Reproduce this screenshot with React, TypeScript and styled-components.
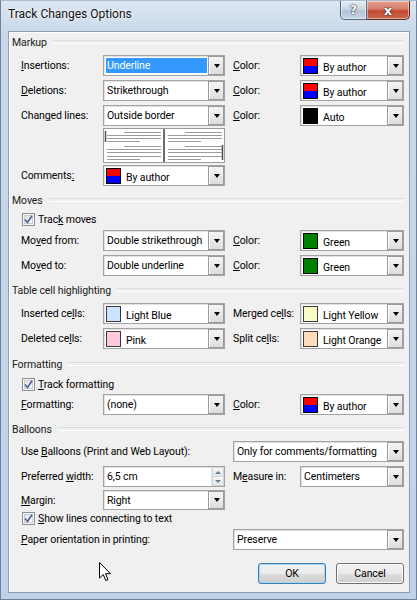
import React from "react";
import styled, { createGlobalStyle } from "styled-components";

const Global = createGlobalStyle`
  html, body { margin: 0; padding: 0; }
  body {
    width: 417px; height: 600px; overflow: hidden;
    font-family: Roboto, "Liberation Sans", Arial, sans-serif;
    font-size: 10.5px; letter-spacing: -0.1px; color: #000;
  }
  * { box-sizing: border-box; }
`;

const Window = styled.div`
  position: relative;
  width: 417px;
  height: 600px;
  display: flex;
  flex-direction: column;
  background: linear-gradient(180deg, #dbe6f2 0%, #c9d9ea 30px, #bfd2e8 100%);
  border: 1px solid #6d839c;
  border-top-color: #a9bcd2;
  overflow: hidden;
`;

const TitleBar = styled.div`
  height: 30px;
  flex: none;
  display: flex;
  align-items: flex-start;
  padding: 0 6px 0 7px;
`;

const Title = styled.div`
  font-size: 12px;
  letter-spacing: 0;
  line-height: 27px;
  color: #111;
  text-shadow: 0 0 6px rgba(255, 255, 255, 0.95), 0 0 2px rgba(255, 255, 255, 0.9);
`;

const TitleButtons = styled.div`
  margin-left: auto;
  display: flex;
  height: 19px;
`;

const CaptionButton = styled.div<{ $close?: boolean }>`
  width: ${(p) => (p.$close ? 43 : 27)}px;
  height: 19px;
  display: flex;
  align-items: center;
  justify-content: center;
  border: 1px solid ${(p) => (p.$close ? "#5e2a22" : "#56677c")};
  border-top: none;
  ${(p) => (p.$close ? "border-left: none;" : "")}
  border-radius: ${(p) => (p.$close ? "0 0 5px 0" : "0 0 0 5px")};
  background: ${(p) =>
    p.$close
      ? "linear-gradient(180deg, #e6a08f 0%, #d37c69 45%, #c24832 55%, #c86a50 100%)"
      : "linear-gradient(180deg, #e3eaf3 0%, #ccd8e6 45%, #b3c4d8 55%, #c6d5e6 100%)"};
  box-shadow: inset 0 0 0 1px rgba(255, 255, 255, 0.45);
  color: #fff;
  font-family: "DejaVu Sans", sans-serif;
  font-weight: bold;
  font-size: ${(p) => (p.$close ? 13 : 12)}px;
  text-shadow: 0 0 2px #333, 0 0 1px #000;
`;

const Client = styled.div`
  flex: 1;
  margin: 0 6px 6px 7px;
  background: #f0f0f0;
  border: 1px solid #8a9db4;
  box-shadow: inset 1px 1px 0 #fff;
  display: flex;
  flex-direction: column;
  padding: 0 4px 0 3px;
`;

const Heading = styled.div<{ $mt: number }>`
  display: flex;
  align-items: center;
  gap: 6px;
  height: 16px;
  margin-top: ${(p) => p.$mt}px;
  color: #1a1a1a;
  &::after {
    content: "";
    flex: 1;
    height: 2px;
    border-top: 1px solid #d5dfe5;
    border-bottom: 1px solid #ffffff;
    margin-right: 1px;
  }
`;

const Row = styled.div<{ $mt: number; $h?: number }>`
  display: grid;
  grid-template-columns: 82px 122px 8px 67px 104px;
  height: ${(p) => p.$h ?? 21}px;
  margin-top: ${(p) => p.$mt}px;
  padding-left: 9px;
`;

const Label = styled.div<{ $col?: string }>`
  grid-column: ${(p) => p.$col ?? "auto"};
  align-self: center;
  white-space: nowrap;
`;

const Cell = styled.div<{ $col: string }>`
  grid-column: ${(p) => p.$col};
  display: flex;
`;

const U = styled.span`
  text-decoration: underline;
`;

const ComboBox = styled.div`
  flex: 1;
  display: flex;
  align-items: stretch;
  background: #fff;
  border: 1px solid #a3a3a3;
  box-shadow: inset 1px 1px 0 #e2e2e2;
  min-width: 0;
`;

const ComboText = styled.div<{ $selected?: boolean; $low?: boolean }>`
  flex: 1;
  display: flex;
  align-items: ${(p) => (p.$low ? "flex-end" : "center")};
  padding: ${(p) => (p.$low ? "0 0 0 4px" : "0 0 0 2px")};
  white-space: nowrap;
  overflow: hidden;
  & > span {
    padding: 0 1px;
    line-height: 15px;
    background: ${(p) => (p.$selected ? "#3399ff" : "transparent")};
    color: ${(p) => (p.$selected ? "#fff" : "#000")};
    flex: ${(p) => (p.$selected ? 1 : "none")};
    margin-right: ${(p) => (p.$selected ? 1 : 0)}px;
  }
`;

const DropButton = styled.div`
  width: 16px;
  flex: none;
  border-left: 1px solid #b6b6b6;
  background: linear-gradient(180deg, #f6f6f6 0%, #e9e9e9 50%, #dcdcdc 100%);
  box-shadow: inset 0 0 0 1px #fdfdfd;
  outline: 1px solid #9a9a9a;
  outline-offset: -1px;
  display: flex;
  align-items: center;
  justify-content: center;
  &::after {
    content: "";
    border-left: 3.5px solid transparent;
    border-right: 3.5px solid transparent;
    border-top: 4px solid #000;
  }
`;

const Swatch = styled.div<{ $fill: string; $border?: string }>`
  width: 15px;
  height: 16px;
  flex: none;
  align-self: center;
  margin-left: 2px;
  background: ${(p) => p.$fill};
  border: 1px solid ${(p) => p.$border ?? "#000"};
`;

const SpinBox = styled.div`
  width: 13px;
  flex: none;
  display: flex;
  flex-direction: column;
  border-left: 1px solid #e4e4e4;
`;

const SpinHalf = styled.div<{ $down?: boolean }>`
  flex: 1;
  display: flex;
  align-items: center;
  justify-content: center;
  background: linear-gradient(180deg, #f7f7f7, #e8e8e8);
  border: 1px solid #d4d4d4;
  ${(p) => (p.$down ? "border-top: none;" : "")}
  &::after {
    content: "";
    border-left: 3px solid transparent;
    border-right: 3px solid transparent;
    ${(p) => (p.$down ? "border-top: 3px solid #5f7e9e;" : "border-bottom: 3px solid #5f7e9e;")}
  }
`;

const AUTHOR = "linear-gradient(180deg, #ff0000 0 50%, #0000ff 50% 100%)";

type ComboProps = {
  value: string;
  selected?: boolean;
  swatch?: string;
  swatchBorder?: string;
};

const Combo = ({ value, selected, swatch, swatchBorder }: ComboProps) => (
  <ComboBox>
    {swatch && <Swatch $fill={swatch} $border={swatchBorder} />}
    <ComboText $selected={selected} $low={!!swatch}>
      <span>{value}</span>
    </ComboText>
    <DropButton />
  </ComboBox>
);

const Spin = ({ value }: { value: string }) => (
  <ComboBox>
    <ComboText>
      <span>{value}</span>
    </ComboText>
    <SpinBox>
      <SpinHalf />
      <SpinHalf $down />
    </SpinBox>
  </ComboBox>
);

const CheckRow = styled.div<{ $mt: number }>`
  display: flex;
  align-items: center;
  gap: 3px;
  height: 16px;
  margin-top: ${(p) => p.$mt}px;
  padding-left: 10px;
`;

const CheckBox = styled.div`
  width: 13px;
  height: 13px;
  border: 1px solid #8e8f8f;
  background: linear-gradient(135deg, #dcdcdc 0%, #f4f4f4 60%, #ffffff 100%);
  box-shadow: inset 0 0 0 1px #f4f4f4, inset 0 0 0 2px #c9ccd1;
  display: flex;
  align-items: center;
  justify-content: center;
`;

const Check = () => (
  <CheckBox>
    <svg width="9" height="9" viewBox="0 0 9 9">
      <path d="M1 4.5 L3.5 7.5 L8 0.8" fill="none" stroke="#4a5f97" strokeWidth="1.6" />
    </svg>
  </CheckBox>
);

const PreviewBox = styled.div`
  grid-column: 2;
  width: 122px;
  height: 35px;
  border: 1px solid #9b9b9b;
  background: #fff;
  display: flex;
`;

const PreviewPane = styled.div<{ $left?: boolean }>`
  flex: 1;
  ${(p) => (p.$left ? "border-right: 2px solid #6f6f6f;" : "")}
  display: flex;
`;

const lines: [number, number, number][] = [
  [3, 20, 57],
  [6, 3, 57],
  [9, 3, 57],
  [12, 3, 36],
  [17, 20, 57],
  [20, 3, 57],
  [23, 3, 57],
  [27, 3, 57],
  [30, 3, 36],
];

const Pane = ({ bar }: { bar: "left" | "right" }) => (
  <svg width="59" height="33" viewBox="0 0 59 33">
    {lines.map(([y, x1, x2], i) => (
      <line key={i} x1={x1} x2={x2} y1={y + 0.5} y2={y + 0.5} stroke="#9d9d9d" strokeWidth="1" />
    ))}
    {bar === "left" ? (
      <line x1="1.5" x2="1.5" y1="2" y2="13" stroke="#4d4d4d" strokeWidth="1.5" />
    ) : (
      <line x1="57.5" x2="57.5" y1="16" y2="31" stroke="#4d4d4d" strokeWidth="1.5" />
    )}
  </svg>
);

const ButtonRow = styled.div`
  display: flex;
  justify-content: flex-end;
  gap: 10px;
  margin-top: 13px;
  padding-right: 1px;
`;

const Button = styled.div<{ $default?: boolean }>`
  width: 68px;
  height: 21px;
  display: flex;
  align-items: center;
  justify-content: center;
  border: 1px solid ${(p) => (p.$default ? "#3c7fb1" : "#707070")};
  border-radius: 3px;
  background: linear-gradient(180deg, #f2f2f2 0%, #ebebeb 50%, #dddddd 51%, #cfcfcf 100%);
  box-shadow: inset 0 0 0 1px ${(p) => (p.$default ? "#a6d6f2" : "#fcfcfc")};
`;

const Cursor = styled.svg`
  position: absolute;
  left: 98px;
  top: 561px;
`;

export default function App() {
  return (
    <>
      <Global />
      <Window>
        <TitleBar>
          <Title>Track Changes Options</Title>
          <TitleButtons>
            <CaptionButton>?</CaptionButton>
            <CaptionButton $close>x</CaptionButton>
          </TitleButtons>
        </TitleBar>
        <Client>
          <Heading $mt={2}>Markup</Heading>
          <Row $mt={5}>
            <Label>
              <U>I</U>nsertions:
            </Label>
            <Cell $col="2">
              <Combo value="Underline" selected />
            </Cell>
            <Label $col="4">
              <U>C</U>olor:
            </Label>
            <Cell $col="5">
              <Combo value="By author" swatch={AUTHOR} />
            </Cell>
          </Row>
          <Row $mt={4}>
            <Label>
              <U>D</U>eletions:
            </Label>
            <Cell $col="2">
              <Combo value="Strikethrough" />
            </Cell>
            <Label $col="4">
              <U>C</U>olor:
            </Label>
            <Cell $col="5">
              <Combo value="By author" swatch={AUTHOR} />
            </Cell>
          </Row>
          <Row $mt={4}>
            <Label>
              Chan<U>g</U>ed lines:
            </Label>
            <Cell $col="2">
              <Combo value="Outside border" />
            </Cell>
            <Label $col="4">
              <U>C</U>olor:
            </Label>
            <Cell $col="5">
              <Combo value="Auto" swatch="#000" />
            </Cell>
          </Row>
          <Row $mt={2} $h={35}>
            <PreviewBox>
              <PreviewPane $left>
                <Pane bar="left" />
              </PreviewPane>
              <PreviewPane>
                <Pane bar="right" />
              </PreviewPane>
            </PreviewBox>
          </Row>
          <Row $mt={2}>
            <Label>
              Comments<U>:</U>
            </Label>
            <Cell $col="2">
              <Combo value="By author" swatch={AUTHOR} />
            </Cell>
          </Row>

          <Heading $mt={6}>Moves</Heading>
          <CheckRow $mt={3}>
            <Check />
            <span>
              Trac<U>k</U> moves
            </span>
          </CheckRow>
          <Row $mt={3}>
            <Label>
              Mo<U>v</U>ed from:
            </Label>
            <Cell $col="2">
              <Combo value="Double strikethrough" />
            </Cell>
            <Label $col="4">
              <U>C</U>olor:
            </Label>
            <Cell $col="5">
              <Combo value="Green" swatch="#008000" />
            </Cell>
          </Row>
          <Row $mt={4}>
            <Label>
              Mo<U>v</U>ed to:
            </Label>
            <Cell $col="2">
              <Combo value="Double underline" />
            </Cell>
            <Label $col="4">
              <U>C</U>olor:
            </Label>
            <Cell $col="5">
              <Combo value="Green" swatch="#008000" />
            </Cell>
          </Row>

          <Heading $mt={6}>Table cell highlighting</Heading>
          <Row $mt={5}>
            <Label>
              Inserted ce<U>l</U>ls:
            </Label>
            <Cell $col="2">
              <Combo value="Light Blue" swatch="#cce4ff" swatchBorder="#3a3a3a" />
            </Cell>
            <Label $col="4">
              Merged ce<U>l</U>ls:
            </Label>
            <Cell $col="5">
              <Combo value="Light Yellow" swatch="#fafac8" swatchBorder="#3a3a3a" />
            </Cell>
          </Row>
          <Row $mt={4}>
            <Label>
              Deleted ce<U>l</U>ls:
            </Label>
            <Cell $col="2">
              <Combo value="Pink" swatch="#ffc8e1" swatchBorder="#3a3a3a" />
            </Cell>
            <Label $col="4">
              Split ce<U>l</U>ls:
            </Label>
            <Cell $col="5">
              <Combo value="Light Orange" swatch="#ffdcb9" swatchBorder="#3a3a3a" />
            </Cell>
          </Row>

          <Heading $mt={7}>Formatting</Heading>
          <CheckRow $mt={4}>
            <Check />
            <span>
              <U>T</U>rack formatting
            </span>
          </CheckRow>
          <Row $mt={2}>
            <Label>
              <U>F</U>ormatting:
            </Label>
            <Cell $col="2">
              <Combo value="(none)" />
            </Cell>
            <Label $col="4">
              <U>C</U>olor:
            </Label>
            <Cell $col="5">
              <Combo value="By author" swatch={AUTHOR} />
            </Cell>
          </Row>

          <Heading $mt={6}>Balloons</Heading>
          <Row $mt={4}>
            <Label $col="1 / 4">
              Use <U>B</U>alloons (Print and Web Layout):
            </Label>
            <Cell $col="4 / 6">
              <Combo value="Only for comments/formatting" />
            </Cell>
          </Row>
          <Row $mt={4}>
            <Label>
              Preferred <U>w</U>idth:
            </Label>
            <Cell $col="2">
              <Spin value="6,5 cm" />
            </Cell>
            <Label $col="4">
              M<U>e</U>asure in:
            </Label>
            <Cell $col="5">
              <Combo value="Centimeters" />
            </Cell>
          </Row>
          <Row $mt={3} $h={20}>
            <Label>
              <U>M</U>argin:
            </Label>
            <Cell $col="2">
              <Combo value="Right" />
            </Cell>
          </Row>
          <CheckRow $mt={0}>
            <Check />
            <span>
              <U>S</U>how lines connecting to text
            </span>
          </CheckRow>
          <Row $mt={3}>
            <Label $col="1 / 4">
              <U>P</U>aper orientation in printing:
            </Label>
            <Cell $col="4 / 6">
              <Combo value="Preserve" />
            </Cell>
          </Row>

          <ButtonRow>
            <Button $default>OK</Button>
            <Button>Cancel</Button>
          </ButtonRow>
        </Client>
        <Cursor width="13" height="20" viewBox="0 0 13 20">
          <path
            d="M0.5 0.5 L0.5 16 L4.2 12.5 L6.8 18.5 L9 17.6 L6.5 11.7 L11.5 11.7 Z"
            fill="#fff"
            stroke="#000"
            strokeWidth="1"
            strokeLinejoin="round"
          />
        </Cursor>
      </Window>
    </>
  );
}
